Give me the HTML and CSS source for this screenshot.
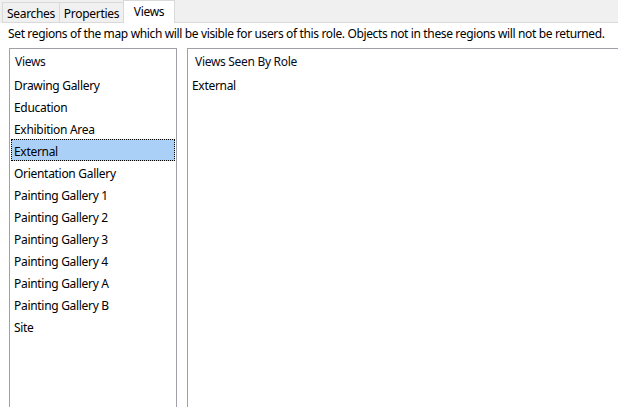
FILE: index.html
```html
<!DOCTYPE html>
<html>
<head>
<meta charset="utf-8">
<link rel="stylesheet" href="styles.css">
</head>
<body>
<div class="tabstrip">
  <div class="tab tab-first">Searches</div>
  <div class="tab tab-props">Properties</div>
  <div class="tab tab-active">Views</div>
  <div class="tab-fill"></div>
</div>
<div class="panel">
  <div class="desc">Set regions of the map which will be visible for users of this role. Objects not in these regions will not be returned.</div>
  <div class="lists">
    <div class="listbox left">
      <div class="header">Views</div>
      <div class="item">Drawing Gallery</div>
      <div class="item">Education</div>
      <div class="item">Exhibition Area</div>
      <div class="item selected">External</div>
      <div class="item">Orientation Gallery</div>
      <div class="item">Painting Gallery 1</div>
      <div class="item">Painting Gallery 2</div>
      <div class="item">Painting Gallery 3</div>
      <div class="item">Painting Gallery 4</div>
      <div class="item">Painting Gallery A</div>
      <div class="item">Painting Gallery B</div>
      <div class="item">Site</div>
    </div>
    <div class="listbox right">
      <div class="header header-right">Views Seen By Role</div>
      <div class="item item-right">External</div>
    </div>
  </div>
</div>
</body>
</html>
```
FILE: styles.css
```css
html, body {
  margin: 0;
  padding: 0;
  background: #ffffff;
  overflow: hidden;
  width: 618px;
  height: 407px;
}
body {
  font-family: "Noto Sans", "Open Sans", sans-serif;
  font-size: 12px;
  letter-spacing: -0.3px;
  color: #000;
}
.tabstrip {
  display: flex;
  align-items: flex-end;
  height: 23px;
  background: #f0f0f0;
  padding-left: 2px;
}
.tab {
  box-sizing: border-box;
  height: 21px;
  border: 1px solid #d9d9d9;
  background: #f0f0f0;
  display: flex;
  align-items: center;
  justify-content: center;
  padding-top: 1px;
}
.tab-first { width: 58px; }
.tab-props { width: 65px; margin-left: -1px; }
.tab-active {
  width: 52px;
  height: 23px;
  margin-left: -1px;
  background: #fff;
  border-bottom: none;
  padding-top: 0;
  padding-bottom: 2px;
}
.tab-fill {
  flex: 1;
  border-bottom: 1px solid #d9d9d9;
}
.panel {
  padding: 2px 0 0 8px;
}
.desc {
  height: 23px;
  line-height: 17px;
  white-space: nowrap;
  letter-spacing: -0.36px;
}
.lists {
  display: flex;
  gap: 10px;
  padding-left: 1px;
}
.listbox {
  box-sizing: border-box;
  height: 380px;
  border: 1px solid #a0a0a8;
  background: #fff;
}
.left {
  width: 168px;
  padding: 0 1px;
}
.right {
  flex: 1;
  margin-right: -20px;
}
.header {
  box-sizing: border-box;
  height: 24px;
  padding-top: 1px;
  line-height: 23px;
  padding-left: 4px;
  color: #0a0a1e;
}
.header-right {
  padding-left: 7px;
}
.item {
  box-sizing: border-box;
  height: 22px;
  padding-top: 3px;
  line-height: 18px;
  padding-left: 2px;
  border: 1px solid transparent;
  white-space: nowrap;
}
.item-right {
  padding-left: 3px;
}
.selected {
  background: #abd0f7;
  border: 1px dotted #000;
}
```
